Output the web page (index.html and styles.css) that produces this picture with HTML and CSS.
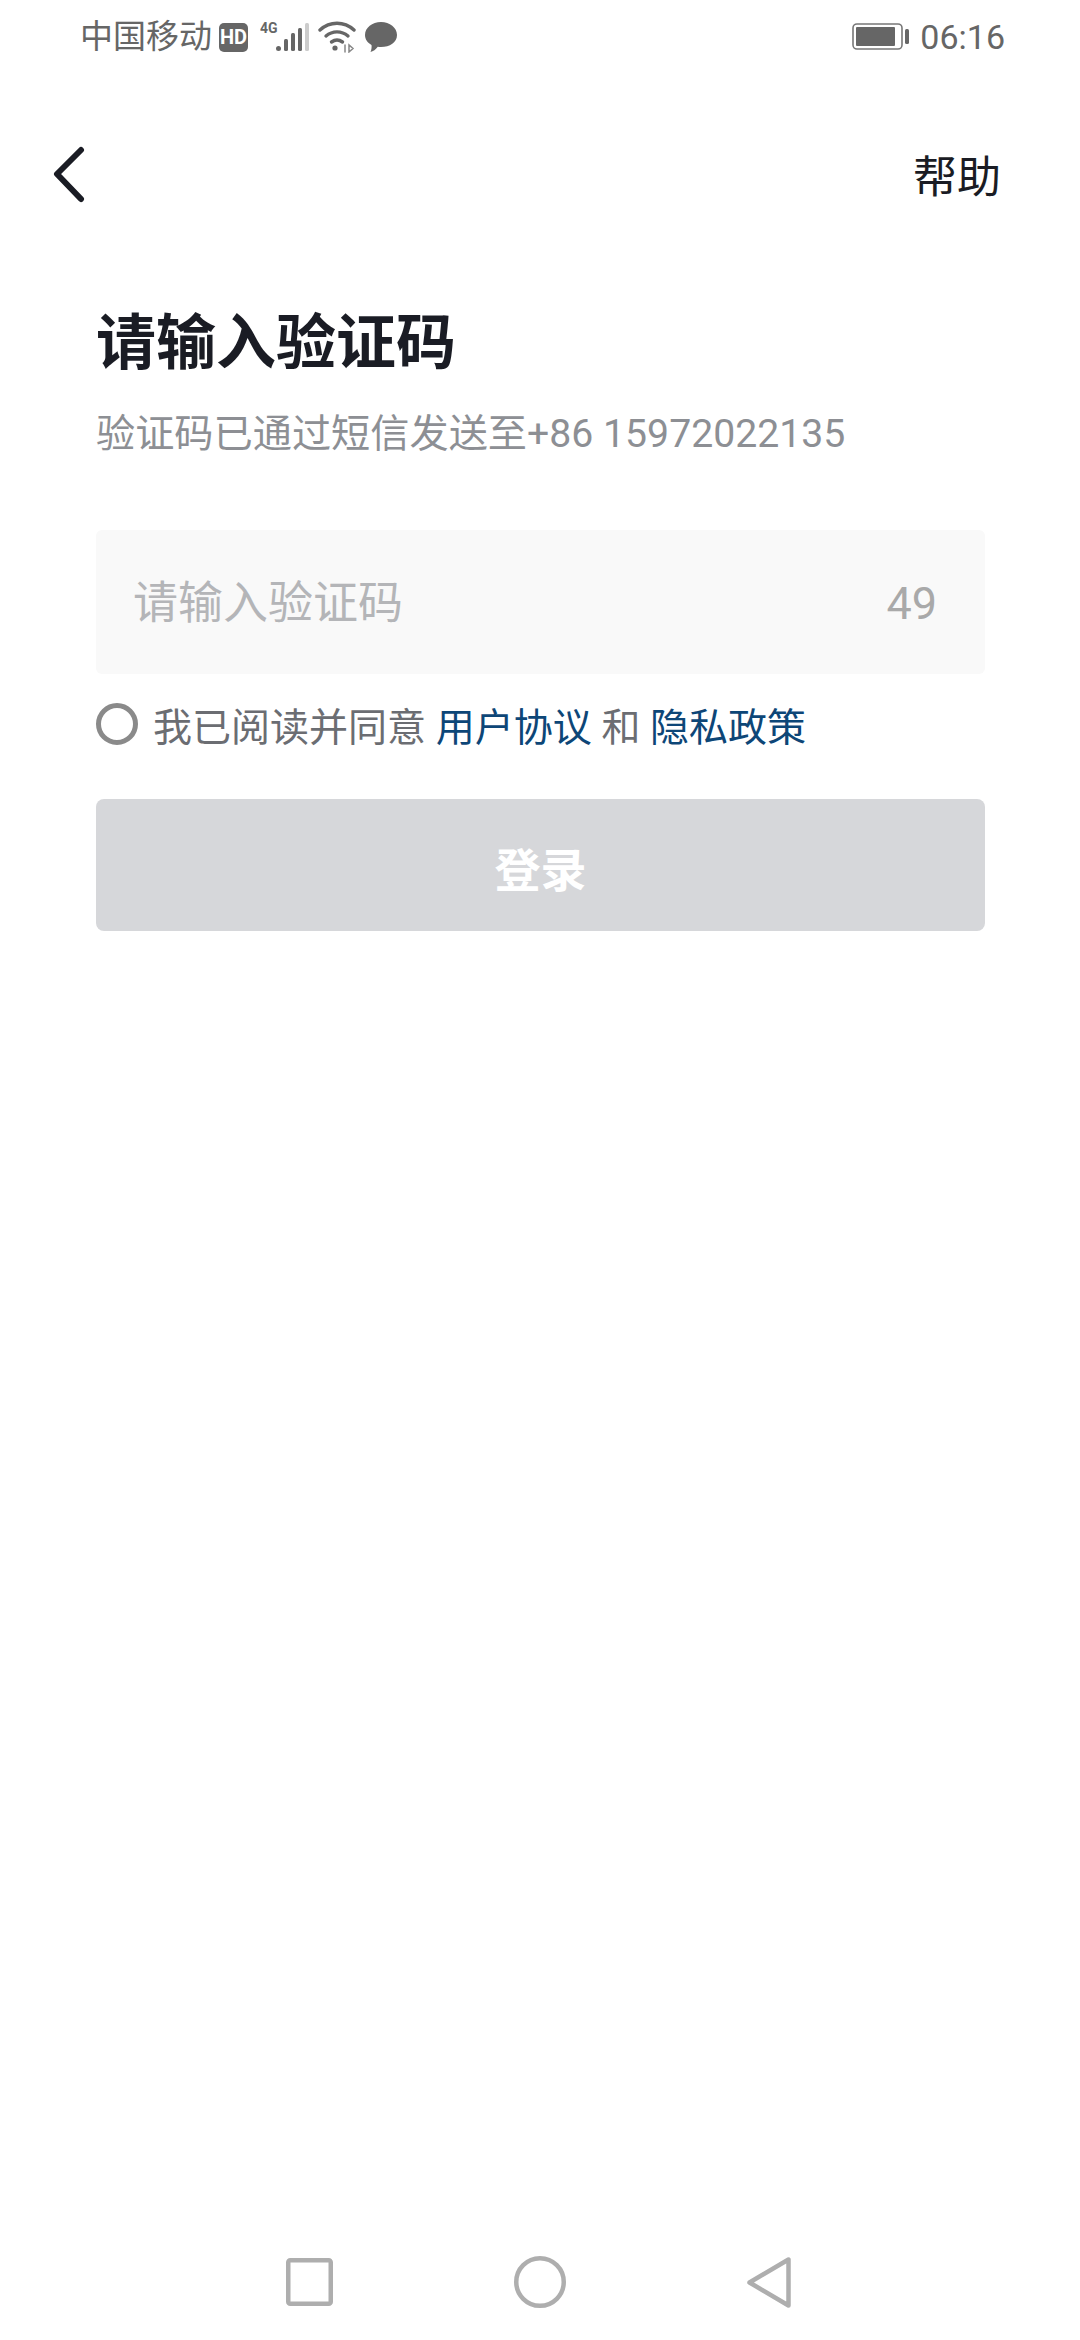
FILE: index.html
```html
<!DOCTYPE html>
<html lang="zh-CN">
<head>
<meta charset="utf-8">
<title>请输入验证码</title>
<link rel="stylesheet" href="styles.css">
</head>
<body>
<div class="screen">
  <header class="status">
    <div class="status-left">
      <span class="carrier">中国移动</span>
      <svg class="ic-hd" width="29" height="29" viewBox="0 0 29 29"><rect width="29" height="29" rx="5" fill="#666"/><text x="14.500" y="21" text-anchor="middle" class="hd-text">HD</text></svg>
      <svg class="ic-signal" width="51" height="32" viewBox="0 0 51 32">
        <text x="0" y="12" class="g4-text">4G</text>
        <circle cx="18.500" cy="27.500" r="2.500" fill="#666"/>
        <rect x="24" y="18" width="4" height="12" rx="1.500" fill="#666"/>
        <rect x="31" y="12" width="4" height="18" rx="1.500" fill="#666"/>
        <rect x="38" y="7" width="4" height="23" rx="1.500" fill="#666"/>
        <rect x="45" y="2" width="4" height="28" rx="1.500" fill="#ccc"/>
      </svg>
      <svg class="ic-wifi" width="38" height="32" viewBox="0 0 38 32" fill="none" stroke="#666" stroke-width="3.400" stroke-linecap="round">
        <path d="M2 9C12 0 26 0 36 9"/>
        <path d="M8 15C14.500 9.500 23.500 9.500 30 15"/>
        <path d="M13.500 21C17 18.500 21 18.500 24.500 21"/>
        <circle cx="17" cy="27" r="2.600" fill="#666" stroke="none"/>
        <path d="M27 24V31M31 31L35 27.500L31 24Z" stroke="#888" stroke-width="1.500"/>
      </svg>
      <svg class="ic-msg" width="32" height="31" viewBox="0 0 32 31"><path d="M16 0C24.800 0 32 5.600 32 13C32 20.400 24.800 25 16 25C14.800 25 13.800 25 12.800 24.800C11 27.400 8 29.500 5.500 30C6.600 27.500 6.800 25 6.500 23C2.500 20.700 0 17.300 0 13C0 5.600 7.200 0 16 0Z" fill="#666"/></svg>
    </div>
    <div class="status-right">
      <svg class="ic-batt" width="58" height="28" viewBox="0 0 58 28">
        <rect x="1" y="1" width="49" height="25" rx="4" fill="none" stroke="#777" stroke-width="1.600"/>
        <rect x="4" y="4" width="39" height="19" rx="1" fill="#666"/>
        <rect x="53" y="6" width="4" height="15" rx="1.500" fill="#666"/>
      </svg>
      <span class="time">06:16</span>
    </div>
  </header>

  <nav class="topbar">
    <svg class="ic-back" width="36" height="58" viewBox="0 0 36 58" fill="none" stroke="#1a1c24" stroke-width="6" stroke-linecap="round" stroke-linejoin="round"><path d="M29 5L5 29L29 54"/></svg>
    <span class="help">帮助</span>
  </nav>

  <main class="content">
    <h1 class="title">请输入验证码</h1>
    <p class="sub">验证码已通过短信发送至+86 15972022135</p>
    <div class="field">
      <span class="placeholder">请输入验证码</span>
      <span class="count">49</span>
    </div>
    <div class="agree">
      <span class="radio"></span>
      <span class="agree-text">我已阅读并同意 <a class="link">用户协议</a> 和 <a class="link">隐私政策</a></span>
    </div>
    <button class="login">登录</button>
  </main>

  <footer class="navbar">
    <svg class="nav-square" width="47" height="48" viewBox="0 0 47 48" fill="none" stroke="#aeaeae" stroke-width="4.500"><rect x="2.250" y="2.250" width="42.500" height="43.500" rx="2"/></svg>
    <svg width="52" height="52" viewBox="0 0 52 52" fill="none" stroke="#aeaeae" stroke-width="4.500"><circle cx="26" cy="26" r="23.750"/></svg>
    <svg class="nav-back" width="44" height="51" viewBox="0 0 44 51" fill="none" stroke="#aeaeae" stroke-width="4.500" stroke-linejoin="round"><path d="M41.500 2.500V48.500L2.500 25.500Z"/></svg>
  </footer>
</div>
</body>
</html>
```

FILE: styles.css
```css
* { box-sizing: border-box; margin: 0; padding: 0; }
html, body { width: 1080px; height: 2340px; background: #fff; overflow: hidden; }
body { font-family: "Roboto", "Noto Sans CJK SC", sans-serif; }
.screen { width: 1080px; height: 2340px; display: flex; flex-direction: column; background: #fff; }

.status { height: 76px; padding: 13px 75px 0 80px; display: flex; justify-content: space-between; align-items: flex-start; color: #666; }
.status-left { display: flex; align-items: center; height: 48px; }
.carrier { font-size: 33px; line-height: 48px; width: 139px; color: #666; }
.ic-hd { margin-right: 12px; }
.hd-text { font: 700 20px "Roboto", sans-serif; fill: #fff; }
.g4-text { font: 700 14px "Roboto", sans-serif; fill: #666; }
.ic-signal { margin-right: 7px; }
.ic-wifi { margin-right: 9px; }
.status-right { display: flex; align-items: center; height: 48px; gap: 10px; }
.time { font-size: 34px; line-height: 48px; color: #666; }

.topbar { height: 195px; padding: 0 79px 0 52px; display: flex; justify-content: space-between; align-items: center; }
.help { font-size: 44px; color: #1a1c24; }

.content { flex: 1; padding: 0 95px 0 96px; display: flex; flex-direction: column; }
.title { font-size: 60px; line-height: 70px; font-weight: 700; color: #1a1c24; margin-top: 38px; }
.sub { font-size: 39.200px; line-height: 50px; color: #8d8f94; margin-top: 30px; }
.field { height: 144px; margin-top: 71px; background: #f9f9f9; border-radius: 6px; padding: 4px 48px 0 37px; display: flex; justify-content: space-between; align-items: center; font-size: 45px; line-height: 60px; color: #b4b5b8; }
.placeholder { line-height: 60px; }
.count { line-height: 60px; color: #a9a9a9; }
.agree { margin-top: 22px; height: 56px; display: flex; align-items: center; gap: 15px; }
.radio { width: 42px; height: 42px; border: 5px solid #8a8a8a; border-radius: 50%; flex: none; }
.agree-text { font-size: 39px; color: #6b6d72; white-space: pre; }
.link { color: #0d4677; }
.login { height: 132px; margin-top: 47px; padding-top: 4px; border: 0; border-radius: 8px; background: #d6d7da; color: #fff; font: 700 46px "Roboto", "Noto Sans CJK SC", sans-serif; }

.navbar { height: 84px; padding-left: 286px; display: flex; align-items: flex-start; gap: 181px; }
.nav-square { margin-top: 2px; }
.nav-back { margin-top: 1px; }
```
